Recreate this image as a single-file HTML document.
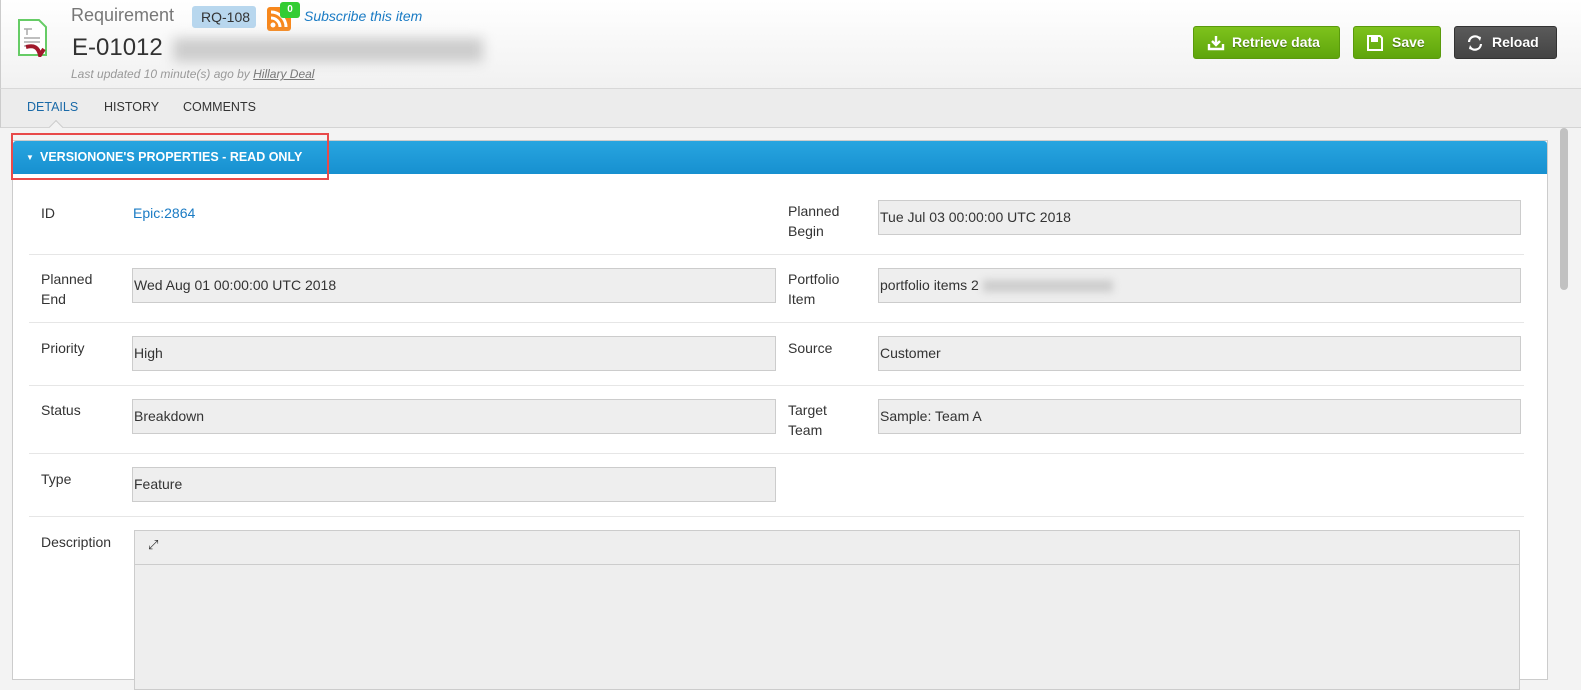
<!DOCTYPE html>
<html><head><meta charset="utf-8"><style>
*{box-sizing:border-box;margin:0;padding:0}
body{width:1581px;height:678px;overflow:hidden;font-family:"Liberation Sans",sans-serif;background:#f3f3f3;position:relative;font-size:14px;color:#333}
.hdr{position:absolute;left:0;top:0;width:1581px;height:89px;background:linear-gradient(#fff,#f1f1f1);border-bottom:1px solid #d8d8d8;border-left:1px solid #ccc}
.tabs{position:absolute;left:0;top:89px;width:1581px;height:39px;background:#ececec;border-bottom:1px solid #d4d4d4;border-left:1px solid #ccc}
.tabs span{position:absolute;top:11px;font-size:12.5px;color:#333}
.btn{position:absolute;top:26px;height:33px;border-radius:3px;color:#fff;font-weight:bold;font-size:14px;line-height:31px;text-shadow:0 1px 1px rgba(0,0,0,.4)}
.btn svg{position:absolute;top:8px}
.g{background:linear-gradient(#7ec21c,#5fa50c);border:1px solid #5a9a0c}
.panel{position:absolute;left:12px;top:140px;width:1536px;height:540px;background:#fff;border:1px solid #ccc}
.ph{position:absolute;left:0;top:0;width:100%;height:33px;background:linear-gradient(#28a5e0,#1790d0);border-radius:3px 3px 0 0;color:#fff;font-weight:bold;font-size:12.5px;line-height:33px;padding-left:27px}
.lbl{position:absolute;font-size:14px;color:#333;line-height:20px}
.inp{position:absolute;height:35px;background:#eee;border:1px solid #ccc;font-size:14px;line-height:33px;padding-left:1px;color:#333}
.sep{position:absolute;height:1px;background:#e6e6e6}
</style></head><body>
<div class="hdr">
<svg style="position:absolute;left:17px;top:19px" width="30" height="38" viewBox="0 0 30 38"><path d="M1 1h20l7 7v28H1z" fill="#fff" stroke="#6c6" stroke-width="2"/><g stroke="#aaa" stroke-width="1.5"><path d="M6 10h8M9 10v6M6 19h16M6 23h16M6 27h10"/></g><path d="M8 28c8-2 12 0 14 8l4-6" fill="none" stroke="#a0182a" stroke-width="4"/></svg>
<div style="position:absolute;left:70px;top:5px;font-size:18px;color:#777">Requirement</div>
<div style="position:absolute;left:191px;top:6px;height:22px;width:64px;background:#b8d7ee;border-radius:3px;font-size:14px;line-height:22px;padding-left:9px;color:#333">RQ-108</div>
<svg style="position:absolute;left:266px;top:7px" width="24" height="24" viewBox="0 0 24 24"><rect width="24" height="24" rx="3" fill="#f7871c"/><circle cx="6" cy="18" r="2.5" fill="#fff"/><path d="M4 11a9 9 0 0 1 9 9M4 5a15 15 0 0 1 15 15" fill="none" stroke="#fff" stroke-width="3"/></svg>
<div style="position:absolute;left:279px;top:2px;width:20px;height:16px;background:#3c3;border-radius:3px;color:#fff;font-size:10px;font-weight:bold;text-align:center;line-height:16px">0</div>
<div style="position:absolute;left:303px;top:8px;font-size:14px;font-style:italic;color:#1a7bc4">Subscribe this item</div>
<div style="position:absolute;left:71px;top:34px;font-size:24px;color:#333">E-01012</div>
<div style="position:absolute;left:172px;top:38px;width:310px;height:24px;background:#ccc;filter:blur(6px)"></div>
<div style="position:absolute;left:70px;top:67px;font-size:12px;font-style:italic;color:#999">Last updated 10 minute(s) ago by <u style="color:#777">Hillary Deal</u></div>
<div class="btn g" style="left:1192px;width:147px;padding-left:38px"><svg style="left:13px" width="18" height="16" viewBox="0 0 18 16"><path d="M9 1v8M5 6l4 4 4-4M2 9v5h14V9" fill="none" stroke="#fff" stroke-width="2.4"/></svg>Retrieve data</div>
<div class="btn g" style="left:1352px;width:88px;padding-left:38px"><svg style="left:13px" width="16" height="16" viewBox="0 0 16 16"><path d="M1 1h12l2 2v12H1z" fill="none" stroke="#fff" stroke-width="2"/><rect x="4" y="2" width="7" height="5" fill="#fff"/></svg>Save</div>
<div class="btn" style="left:1453px;width:103px;padding-left:37px;background:linear-gradient(#5a5a5a,#444);border:1px solid #333"><svg style="left:12px" width="16" height="16" viewBox="0 0 16 16"><path d="M2 7a6 6 0 0 1 11-3M14 9a6 6 0 0 1-11 3" fill="none" stroke="#fff" stroke-width="2.2"/><path d="M10 1l4 1-1 4zM6 15l-4-1 1-4z" fill="#fff"/></svg>Reload</div>
</div>
<div class="tabs"><span style="left:26px;color:#1a6aa8">DETAILS</span><span style="left:103px">HISTORY</span><span style="left:182px">COMMENTS</span>
<div style="position:absolute;left:50px;top:33px;width:10px;height:10px;background:#f3f3f3;border-left:1px solid #ccc;border-top:1px solid #ccc;transform:rotate(45deg)"></div></div>
<div style="position:absolute;left:1560px;top:128px;width:8px;height:162px;background:#c1c1c1;border-radius:4px"></div>
<div class="panel">
<div class="ph"><span style="position:absolute;left:13px;font-size:8px">▼</span>VERSIONONE'S PROPERTIES - READ ONLY</div>
<div class="lbl" style="left:28px;top:62px">ID</div><div class="lbl" style="left:120px;top:62px;color:#1a7bc4">Epic:2864</div>
<div class="lbl" style="left:775px;top:60px">Planned<br>Begin</div><div class="inp" style="left:865px;top:59px;width:643px">Tue Jul 03 00:00:00 UTC 2018</div>
<div class="sep" style="left:16px;top:113px;width:1495px"></div>
<div class="lbl" style="left:28px;top:128px">Planned<br>End</div><div class="inp" style="left:119px;top:127px;width:644px">Wed Aug 01 00:00:00 UTC 2018</div>
<div class="lbl" style="left:775px;top:128px">Portfolio<br>Item</div><div class="inp" style="left:865px;top:127px;width:643px">portfolio items 2 <span style="display:inline-block;width:130px;height:12px;background:#ccc;filter:blur(4px);vertical-align:middle"></span></div>
<div class="sep" style="left:16px;top:181px;width:1495px"></div>
<div class="lbl" style="left:28px;top:197px">Priority</div><div class="inp" style="left:119px;top:195px;width:644px">High</div>
<div class="lbl" style="left:775px;top:197px">Source</div><div class="inp" style="left:865px;top:195px;width:643px">Customer</div>
<div class="sep" style="left:16px;top:244px;width:1495px"></div>
<div class="lbl" style="left:28px;top:259px">Status</div><div class="inp" style="left:119px;top:258px;width:644px">Breakdown</div>
<div class="lbl" style="left:775px;top:259px">Target<br>Team</div><div class="inp" style="left:865px;top:258px;width:643px">Sample: Team A</div>
<div class="sep" style="left:16px;top:312px;width:1495px"></div>
<div class="lbl" style="left:28px;top:328px">Type</div><div class="inp" style="left:119px;top:326px;width:644px">Feature</div>
<div class="sep" style="left:16px;top:375px;width:1495px"></div>
<div class="lbl" style="left:28px;top:391px">Description</div>
<div style="position:absolute;left:121px;top:389px;width:1386px;height:160px;background:#eee;border:1px solid #ccc"><div style="height:34px;border-bottom:1px solid #ccc;font-size:13px;padding:6px 0 0 13px">⤢</div></div>
</div>
<div style="position:absolute;left:11px;top:133px;width:318px;height:47px;border:2px solid #e84a4a"></div>
</body></html>
